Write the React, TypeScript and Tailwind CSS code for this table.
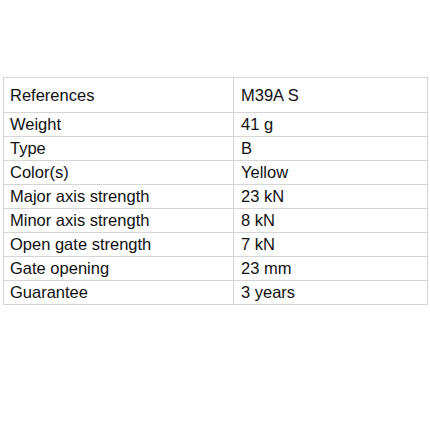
const rows: [string, string][] = [
  ['Weight', '41 g'],
  ['Type', 'B'],
  ['Color(s)', 'Yellow'],
  ['Major axis strength', '23 kN'],
  ['Minor axis strength', '8 kN'],
  ['Open gate strength', '7 kN'],
  ['Gate opening', '23 mm'],
  ['Guarantee', '3 years'],
];

export default function App() {
  return (
    <div className="w-[430px] h-[430px] bg-white pt-[77px] pl-[3px] font-['Liberation_Sans',Arial,sans-serif] text-[16.5px] text-[#111]">
      <table className="w-[424px] border-collapse table-fixed">
        <colgroup>
          <col className="w-[230px]" />
          <col className="w-[194px]" />
        </colgroup>
        <thead>
          <tr className="h-[35px]">
            <th className="border border-[#d6d6d6] pl-[6px] text-left font-normal">References</th>
            <th className="border border-[#d6d6d6] pl-[7px] text-left font-normal">M39A S</th>
          </tr>
        </thead>
        <tbody>
          {rows.map(([label, value]) => (
            <tr key={label} className="h-[24px]">
              <td className="border border-[#d6d6d6] pl-[6px] leading-none">{label}</td>
              <td className="border border-[#d6d6d6] pl-[7px] leading-none">{value}</td>
            </tr>
          ))}
        </tbody>
      </table>
    </div>
  );
}
